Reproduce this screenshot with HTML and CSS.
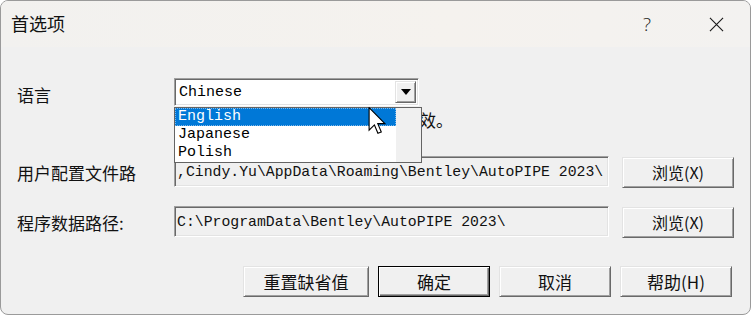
FILE: index.html
```html
<!DOCTYPE html>
<html lang="zh">
<head>
<meta charset="utf-8">
<title>首选项</title>
<link rel="stylesheet" href="styles.css">
</head>
<body>
<div class="window">
  <div class="titlebar">
    <span class="title">首选项</span>
    <span class="help">?</span>
    <svg class="close" width="16" height="16" viewBox="0 0 16 16"><path d="M1 1 L15 15 M15 1 L1 15" stroke="#1a1a1a" stroke-width="1.2" fill="none"/></svg>
  </div>
  <div class="content">
    <div class="row row-lang">
      <span class="label">语言</span>
      <div class="combo">
        <span class="combo-text">Chinese</span>
        <span class="combo-btn"><svg width="10" height="6" viewBox="0 0 10 6"><path d="M0 0 H10 L5 6 Z" fill="#000"/></svg></span>
        <div class="dropdown">
          <div class="list">
            <div class="item selected">English</div>
            <div class="item">Japanese</div>
            <div class="item">Polish</div>
          </div>
          <div class="track"></div>
        </div>
      </div>
    </div>
    <div class="hint">效。</div>
    <div class="row row-path first">
      <span class="label">用户配置文件路</span>
      <div class="field">,Cindy.Yu\AppData\Roaming\Bentley\AutoPIPE 2023\</div>
      <button class="btn browse">浏览(X)</button>
    </div>
    <div class="row row-path second">
      <span class="label">程序数据路径:</span>
      <div class="field">C:\ProgramData\Bentley\AutoPIPE 2023\</div>
      <button class="btn browse">浏览(X)</button>
    </div>
    <div class="actions">
      <button class="btn wide">重置缺省值</button>
      <button class="btn default">确定</button>
      <button class="btn">取消</button>
      <button class="btn">帮助(H)</button>
    </div>
  </div>
  <svg class="cursor" width="19" height="28" viewBox="0 0 13 20"><path d="M0.5 0.5 L0.5 16.5 L4.3 12.8 L6.8 18.8 L9.2 17.8 L6.7 11.9 L11.8 11.9 Z" fill="#fff" stroke="#000" stroke-width="0.8" stroke-linejoin="miter"/></svg>
</div>
</body>
</html>
```

FILE: styles.css
```css
* { box-sizing: border-box; }
html, body { margin: 0; padding: 0; background: #ffffff; }
body { width: 753px; height: 316px; overflow: hidden; }

.window {
  position: relative;
  width: 751px;
  height: 315px;
  border: 1px solid #9a9a9a;
  border-radius: 8px;
  background: #f0f0f0;
  overflow: hidden;
  font-family: "Noto Sans CJK SC", "Noto Sans", sans-serif;
  color: #000;
}

.titlebar {
  height: 46px;
  background: linear-gradient(90deg, #f2f1ef 0%, #f5f2ee 60%, #f3f2f0 100%);
  display: flex;
  align-items: center;
  padding-left: 10px;
}
.title { font-size: 18px; line-height: 20px; margin-top: -2px; color: #111; }
.help { margin-left: auto; font-family: "Open Sans", "Noto Sans", sans-serif; font-size: 19px; font-weight: 300; color: #222; margin-right: 58px; margin-top: -1px; }
.close { margin-right: 26px; width: 15px; height: 15px; margin-top: 0; }

.content { padding: 31px 0 0 16px; }

.label { font-size: 17px; line-height: 20px; width: 157px; flex: none; color: #111; }

.row { display: flex; align-items: center; }
.row-lang { height: 28px; }
.row-lang .label { margin-top: 5px; }

.combo {
  position: relative;
  width: 245px;
  height: 28px;
  background: #fff;
  border: 1px solid;
  border-color: #a0a0a0 #ffffff #ffffff #a0a0a0;
  box-shadow: inset 1px 1px 0 #696969, inset -1px -1px 0 #e3e3e3;
  display: flex;
  align-items: center;
  padding-left: 4px;
}
.combo-text { font-family: "Liberation Mono", monospace; font-size: 15px; line-height: 18px; margin-top: 1px; }
.combo-btn {
  margin-left: auto;
  margin-right: 2px;
  width: 21px;
  height: 22px;
  background: #f0f0f0;
  border: 1px solid;
  border-color: #e3e3e3 #696969 #696969 #e3e3e3;
  box-shadow: inset 1px 1px 0 #fff, inset -1px -1px 0 #a0a0a0;
  display: flex;
  align-items: center;
  justify-content: center;
}

.dropdown {
  position: absolute;
  left: -1px;
  top: 28px;
  width: 248px;
  height: 56px;
  background: #fff;
  border: 1px solid #646464;
  display: flex;
  z-index: 5;
}
.list { width: 221px; }
.track { flex: 1; background: #f0f0f0; }
.item {
  font-family: "Liberation Mono", monospace;
  font-size: 15px;
  line-height: 18px;
  height: 18px;
  padding-left: 3px;
}
.item.selected { background: #0078d7; color: #fff; border: 1px dotted #7fb8e8; padding-left: 2px; line-height: 16px; }

.hint {
  font-size: 17px;
  line-height: 20px;
  height: 20px;
  margin: 4px 0 0 402px;
  white-space: nowrap;
  color: #111;
}

.row-path { height: 31px; }
.row-path.first { margin-top: 26px; }
.row-path.second { margin-top: 19px; }
.row-path .label { margin-top: 2px; }

.field {
  width: 435px;
  height: 31px;
  border: 1px solid;
  border-color: #a0a0a0 #ffffff #ffffff #a0a0a0;
  box-shadow: inset 1px 1px 0 #696969, inset -1px -1px 0 #e3e3e3;
  background: #f0f0f0;
  font-family: "Liberation Mono", monospace;
  font-size: 14.8px;
  line-height: 18px;
  padding: 6px 0 0 2px;
  white-space: nowrap;
  overflow: hidden;
  color: #111;
}

.btn {
  font-family: "Noto Sans CJK SC", "Noto Sans", sans-serif;
  font-size: 17px;
  line-height: 20px;
  color: #111;
  width: 112px;
  height: 31px;
  padding: 0;
  background: #f0f0f0;
  border: 1px solid;
  border-color: #e3e3e3 #696969 #696969 #e3e3e3;
  box-shadow: inset 1px 1px 0 #ffffff, inset -1px -1px 0 #a0a0a0;
  border-radius: 0;
}
.browse { margin-left: 13px; margin-top: 1px; font-size: 16px; }

.actions { display: flex; margin-top: 29px; padding-left: 226px; }
.actions .btn + .btn { margin-left: 9px; }
.actions .wide { width: 126px; }
.actions .default {
  border: 1px solid #000;
  box-shadow: inset 1px 1px 0 #ffffff, inset -1px -1px 0 #696969, inset -2px -2px 0 #a0a0a0;
  margin-left: 11px;
}

.cursor { position: absolute; left: 367px; top: 106px; z-index: 10; }
```
